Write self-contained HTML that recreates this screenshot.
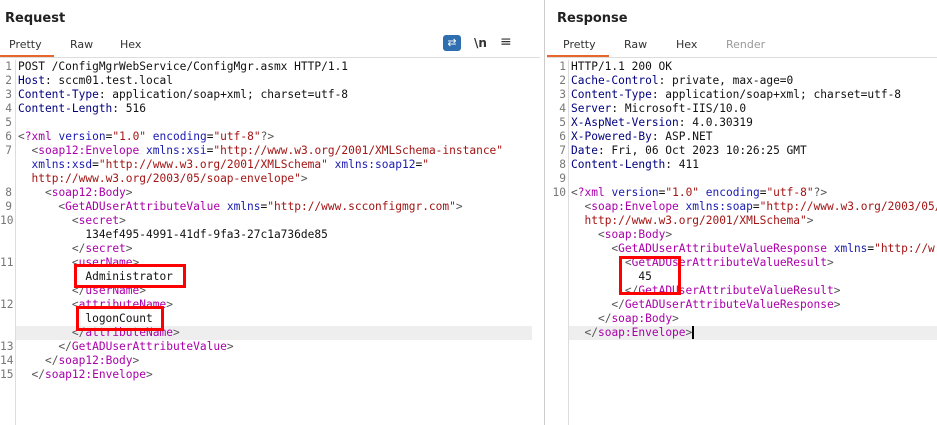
<!DOCTYPE html>
<html><head><style>
body{margin:0;width:937px;height:425px;background:#fff;overflow:hidden;font-family:"DejaVu Sans","Liberation Sans",sans-serif;position:relative}
.title{position:absolute;top:11px;font-weight:bold;font-size:13px;color:#222}
.tab{position:absolute;top:38px;font-size:11px;color:#333}
.ul{position:absolute;top:55px;height:2px;background:#e8662c}
.hline{position:absolute;top:57px;height:1px;background:#ddd}
.code{position:absolute;font-family:"DejaVu Sans Mono","Liberation Mono",monospace;font-size:11.2px;line-height:14px;white-space:pre;color:#111}
.gut{position:absolute;top:60px;width:1px;height:365px;background:#ddd}
.ln{position:absolute;font-family:"DejaVu Sans Mono","Liberation Mono",monospace;font-size:11.2px;line-height:14px;white-space:pre;color:#777;text-align:right}
.h{color:#00007f}.t{color:#a0a}.b{color:#555}.a{color:#1a1ab0}.s{color:#a31515}
.box{position:absolute;border:3px solid #f00;box-sizing:border-box}
.hl{position:absolute;height:14px;background:#eee}
.clip{position:absolute;left:569px;top:0;width:368px;height:425px;overflow:hidden}
</style></head><body>
<div style="position:absolute;left:544px;top:0;width:1px;height:425px;background:#ccc"></div>
<div class="title" style="left:5px">Request</div>
<div class="tab" style="left:9px">Pretty</div><div class="tab" style="left:70px">Raw</div><div class="tab" style="left:120px">Hex</div>
<div class="ul" style="left:0;width:54px"></div><div class="hline" style="left:0;width:540px"></div>
<div style="position:absolute;left:443px;top:35px;width:18px;height:16px;background:#2f6fb0;border-radius:3px;color:#fff;font-size:11px;line-height:16px;text-align:center">&#8644;</div>
<div style="position:absolute;left:474px;top:36px;font-size:12px;font-weight:bold;color:#333">\n</div>
<div style="position:absolute;left:500px;top:34px;font-size:14px;color:#333">&#8801;</div>
<div class="title" style="left:557px">Response</div>
<div class="tab" style="left:563px">Pretty</div><div class="tab" style="left:624px">Raw</div><div class="tab" style="left:676px">Hex</div><div class="tab" style="left:726px;color:#999">Render</div>
<div class="ul" style="left:547px;width:62px"></div><div class="hline" style="left:547px;width:390px"></div>
<div class="gut" style="left:15px"></div><div class="gut" style="left:568px"></div>
<div class="hl" style="left:16px;top:326px;width:516px"></div>
<div class="hl" style="left:569px;top:326px;width:368px"></div>
<div class="ln" style="left:0;top:60px;width:12px">1
2
3
4
5
6
7


8
9
10


11


12


13
14
15</div>
<div class="code" style="left:18px;top:60px">POST /ConfigMgrWebService/ConfigMgr.asmx HTTP/1.1
<span class="h">Host</span>: sccm01.test.local
<span class="h">Content-Type</span>: application/soap+xml; charset=utf-8
<span class="h">Content-Length</span>: 516

<span class="b">&lt;</span><span class="t">?xml</span> <span class="a">version</span>=<span class="s">"1.0"</span> <span class="a">encoding</span>=<span class="s">"utf-8"</span><span class="b">?&gt;</span>
  <span class="b">&lt;</span><span class="t">soap12:Envelope</span> <span class="a">xmlns:xsi</span>=<span class="s">"http://www.w3.org/2001/XMLSchema-instance"</span>
  <span class="a">xmlns:xsd</span>=<span class="s">"http://www.w3.org/2001/XMLSchema"</span> <span class="a">xmlns:soap12</span>=<span class="s">"</span>
  <span class="s">http://www.w3.org/2003/05/soap-envelope"</span><span class="b">&gt;</span>
    <span class="b">&lt;</span><span class="t">soap12:Body</span><span class="b">&gt;</span>
      <span class="b">&lt;</span><span class="t">GetADUserAttributeValue</span> <span class="a">xmlns</span>=<span class="s">"http://www.scconfigmgr.com"</span><span class="b">&gt;</span>
        <span class="b">&lt;</span><span class="t">secret</span><span class="b">&gt;</span>
          134ef495-4991-41df-9fa3-27c1a736de85
        <span class="b">&lt;/</span><span class="t">secret</span><span class="b">&gt;</span>
        <span class="b">&lt;</span><span class="t">userName</span><span class="b">&gt;</span>
          Administrator
        <span class="b">&lt;/</span><span class="t">userName</span><span class="b">&gt;</span>
        <span class="b">&lt;</span><span class="t">attributeName</span><span class="b">&gt;</span>
          logonCount
        <span class="b">&lt;/</span><span class="t">attributeName</span><span class="b">&gt;</span>
      <span class="b">&lt;/</span><span class="t">GetADUserAttributeValue</span><span class="b">&gt;</span>
    <span class="b">&lt;/</span><span class="t">soap12:Body</span><span class="b">&gt;</span>
  <span class="b">&lt;/</span><span class="t">soap12:Envelope</span><span class="b">&gt;</span></div>
<div class="ln" style="left:549px;top:60px;width:17px">1
2
3
4
5
6
7
8
9
10</div>
<div class="clip"><div class="code" style="left:2px;top:60px">HTTP/1.1 200 OK
<span class="h">Cache-Control</span>: private, max-age=0
<span class="h">Content-Type</span>: application/soap+xml; charset=utf-8
<span class="h">Server</span>: Microsoft-IIS/10.0
<span class="h">X-AspNet-Version</span>: 4.0.30319
<span class="h">X-Powered-By</span>: ASP.NET
<span class="h">Date</span>: Fri, 06 Oct 2023 10:26:25 GMT
<span class="h">Content-Length</span>: 411

<span class="b">&lt;</span><span class="t">?xml</span> <span class="a">version</span>=<span class="s">"1.0"</span> <span class="a">encoding</span>=<span class="s">"utf-8"</span><span class="b">?&gt;</span>
  <span class="b">&lt;</span><span class="t">soap:Envelope</span> <span class="a">xmlns:soap</span>=<span class="s">"http://www.w3.org/2003/05/</span>
  <span class="s">http://www.w3.org/2001/XMLSchema"</span><span class="b">&gt;</span>
    <span class="b">&lt;</span><span class="t">soap:Body</span><span class="b">&gt;</span>
      <span class="b">&lt;</span><span class="t">GetADUserAttributeValueResponse</span> <span class="a">xmlns</span>=<span class="s">"http://w</span>
        <span class="b">&lt;</span><span class="t">GetADUserAttributeValueResult</span><span class="b">&gt;</span>
          45
        <span class="b">&lt;/</span><span class="t">GetADUserAttributeValueResult</span><span class="b">&gt;</span>
      <span class="b">&lt;/</span><span class="t">GetADUserAttributeValueResponse</span><span class="b">&gt;</span>
    <span class="b">&lt;/</span><span class="t">soap:Body</span><span class="b">&gt;</span>
  <span class="b">&lt;/</span><span class="t">soap:Envelope</span><span class="b">&gt;</span><span style="border-left:2px solid #000"></span></div></div>
<div class="box" style="left:74px;top:264px;width:112px;height:24px"></div>
<div class="box" style="left:76px;top:306px;width:88px;height:25px"></div>
<div class="box" style="left:619px;top:256px;width:62px;height:39px"></div>
</body></html>
